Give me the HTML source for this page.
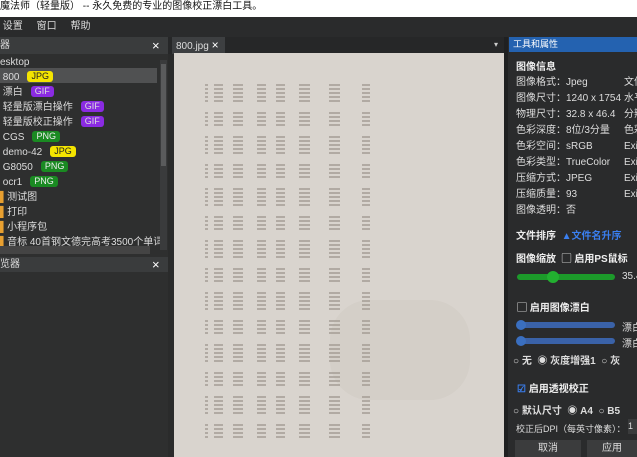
<!DOCTYPE html>
<html><head><meta charset="utf-8"><style>
*{margin:0;padding:0;box-sizing:border-box}
body{width:637px;height:457px;overflow:hidden;background:#2b2c2d;font-family:"Liberation Sans","Noto Sans CJK SC",sans-serif;font-size:10px;color:#ddd;position:relative}
.a{position:absolute;white-space:nowrap}
.tag{display:inline-block;font-size:9px;padding:0 4px;border-radius:3px;line-height:11px;margin-left:8px;vertical-align:1px}
.y{background:#f4e400;color:#222}.p{background:#8a2be2;color:#ddd}.g{background:#1a8a22;color:#eee}
.col{position:absolute;top:84px;height:360px;background:repeating-linear-gradient(180deg,#a49d95 0 2px,transparent 2px 4px);-webkit-mask:repeating-linear-gradient(180deg,#000 0 18px,transparent 18px 26px);mask:repeating-linear-gradient(180deg,#000 0 18px,transparent 18px 26px);opacity:.75}
.rl{color:#ddd}
</style></head><body>
<div class="a" style="left:0;top:0;width:637px;height:17px;background:#fff;color:#111;font-size:10px;line-height:14px">魔法师（轻量版） --  永久免费的专业的图像校正漂白工具。</div>
<div class="a" style="left:0;top:17px;width:637px;height:20px;background:#2a2b2c;line-height:20px;font-size:10px">&nbsp;设置 &nbsp;&nbsp;&nbsp;&nbsp;窗口 &nbsp;&nbsp;&nbsp;&nbsp;帮助</div>
<div class="a" style="left:0;top:37px;width:168px;height:420px;background:#2e2f2f"></div>
<div class="a" style="left:0;top:37px;width:168px;height:17px;background:#3a3c3d;line-height:17px">器<span style="position:absolute;left:152px;font-size:13px;color:#fff">×</span></div>
<div class="a" style="left:0;top:68px;width:157px;height:15px;background:#505152"></div>
<div class="a" style="left:0;top:55px;line-height:15px;font-size:10px">esktop<br>
&nbsp;800<span class="tag y">JPG</span><br>
&nbsp;漂白<span class="tag p">GIF</span><br>
&nbsp;轻量版漂白操作<span class="tag p">GIF</span><br>
&nbsp;轻量版校正操作<span class="tag p">GIF</span><br>
&nbsp;CGS<span class="tag g">PNG</span><br>
&nbsp;demo-42<span class="tag y">JPG</span><br>
&nbsp;G8050<span class="tag g">PNG</span><br>
&nbsp;ocr1<span class="tag g">PNG</span><br>
<span style="color:#e8a030">▌</span>测试图<br><span style="color:#e8a030">▌</span>打印<br><span style="color:#e8a030">▌</span>小程序包<br><span style="color:#e8a030">▌</span>音标 40首钢文德完高考3500个单词</div>
<div class="a" style="left:160px;top:60px;width:7px;height:190px;background:#3a3b3c"></div>
<div class="a" style="left:161px;top:64px;width:5px;height:102px;background:#5a5b5c"></div>
<div class="a" style="left:0;top:246px;width:150px;height:8px;background:#444"></div>
<div class="a" style="left:0;top:257px;width:168px;height:15px;background:#3a3c3d;line-height:15px">览器<span style="position:absolute;left:152px;font-size:13px;color:#fff">×</span></div>
<div class="a" style="left:168px;top:37px;width:340px;height:17px;background:#262728"></div>
<div class="a" style="left:172px;top:37px;width:53px;height:17px;background:#3d3f41;line-height:17px;padding-left:4px;font-size:10px">800.jpg <span style="font-size:12px;color:#fff">×</span></div>
<div class="a" style="left:494px;top:40px;font-size:8px;color:#ccc">▾</div>
<div class="a" style="left:168px;top:54px;width:340px;height:403px;background:#2a2b2b"></div>
<div class="a" style="left:174px;top:53px;width:330px;height:404px;background:#d9d4ce"></div>
<div class="a" style="left:330px;top:300px;width:140px;height:100px;background:#d0c9c1;border-radius:40px;opacity:.5"></div>
<div class="col" style="left:205px;width:3px"></div>
<div class="col" style="left:214px;width:9px"></div>
<div class="col" style="left:233px;width:10px"></div>
<div class="col" style="left:257px;width:9px"></div>
<div class="col" style="left:276px;width:9px"></div>
<div class="col" style="left:299px;width:11px"></div>
<div class="col" style="left:329px;width:11px"></div>
<div class="col" style="left:362px;width:8px"></div>
<div class="a" style="left:504px;top:37px;width:4px;height:420px;background:#1f2021"></div>
<div class="a" style="left:508px;top:37px;width:129px;height:420px;background:#2a2b2c"></div>
<div class="a" style="left:509px;top:37px;width:128px;height:15px;background:#2462b0;line-height:15px;padding-left:4px;color:#fff;font-size:9px">工具和属性</div>
<div class="a" style="left:516px;top:58px;font-weight:bold;font-size:10px;color:#eee">图像信息</div>
<div class="a rl" style="left:516px;top:75px;line-height:16px;font-size:10px">图像格式：Jpeg<br>图像尺寸：1240 x 1754<br>物理尺寸：32.8 x 46.4<br>色彩深度：8位/3分量<br>色彩空间：sRGB<br>色彩类型：TrueColor<br>压缩方式：JPEG<br>压缩质量：93<br>图像透明：否</div>
<div class="a rl" style="left:624px;top:75px;line-height:16px">文件<br>水平<br>分辨<br>色彩<br>Exif<br>Exif<br>Exif<br>Exif</div>
<div class="a" style="left:516px;top:227px;font-weight:bold;font-size:10px;color:#eee">文件排序 &nbsp;<span style="color:#3a7ff0">▲文件名升序</span></div>
<div class="a" style="left:516px;top:250px;font-weight:bold;font-size:10px;color:#eee">图像缩放 &nbsp;▢ 启用PS鼠标</div>
<div class="a" style="left:517px;top:274px;width:98px;height:6px;background:#1c9a2a;border-radius:3px"></div>
<div class="a" style="left:547px;top:271px;width:12px;height:12px;background:#22b030;border-radius:6px"></div>
<div class="a" style="left:622px;top:271px">35.4</div>
<div class="a" style="left:517px;top:299px;font-weight:bold;color:#eee">▢ 启用图像漂白</div>
<div class="a" style="left:517px;top:322px;width:98px;height:6px;background:#3a62a8;border-radius:3px"></div>
<div class="a" style="left:516px;top:320px;width:10px;height:10px;background:#3a6fc0;border-radius:5px"></div>
<div class="a" style="left:622px;top:319px">漂白</div>
<div class="a" style="left:517px;top:338px;width:98px;height:6px;background:#3a62a8;border-radius:3px"></div>
<div class="a" style="left:516px;top:336px;width:10px;height:10px;background:#3a6fc0;border-radius:5px"></div>
<div class="a" style="left:622px;top:335px">漂白</div>
<div class="a" style="left:513px;top:352px;font-weight:bold">○ 无 &nbsp;◉ 灰度增强1 &nbsp;○ 灰</div>
<div class="a" style="left:517px;top:380px;font-weight:bold;color:#eee"><span style="color:#3a7ff0">☑</span> 启用透视校正</div>
<div class="a" style="left:513px;top:402px;font-weight:bold">○ 默认尺寸 &nbsp;◉ A4 &nbsp;○ B5</div>
<div class="a" style="left:516px;top:422px;font-size:9px">校正后DPI（每英寸像素）：</div>
<div class="a" style="left:628px;top:419px;width:9px;height:15px;background:#3a3b3c;font-size:9px;line-height:15px">1</div>
<div class="a" style="left:515px;top:440px;width:66px;height:17px;background:#3b3c3d;text-align:center;line-height:17px">取消</div>
<div class="a" style="left:587px;top:440px;width:50px;height:17px;background:#3b3c3d;text-align:center;line-height:17px">应用</div>
</body></html>
